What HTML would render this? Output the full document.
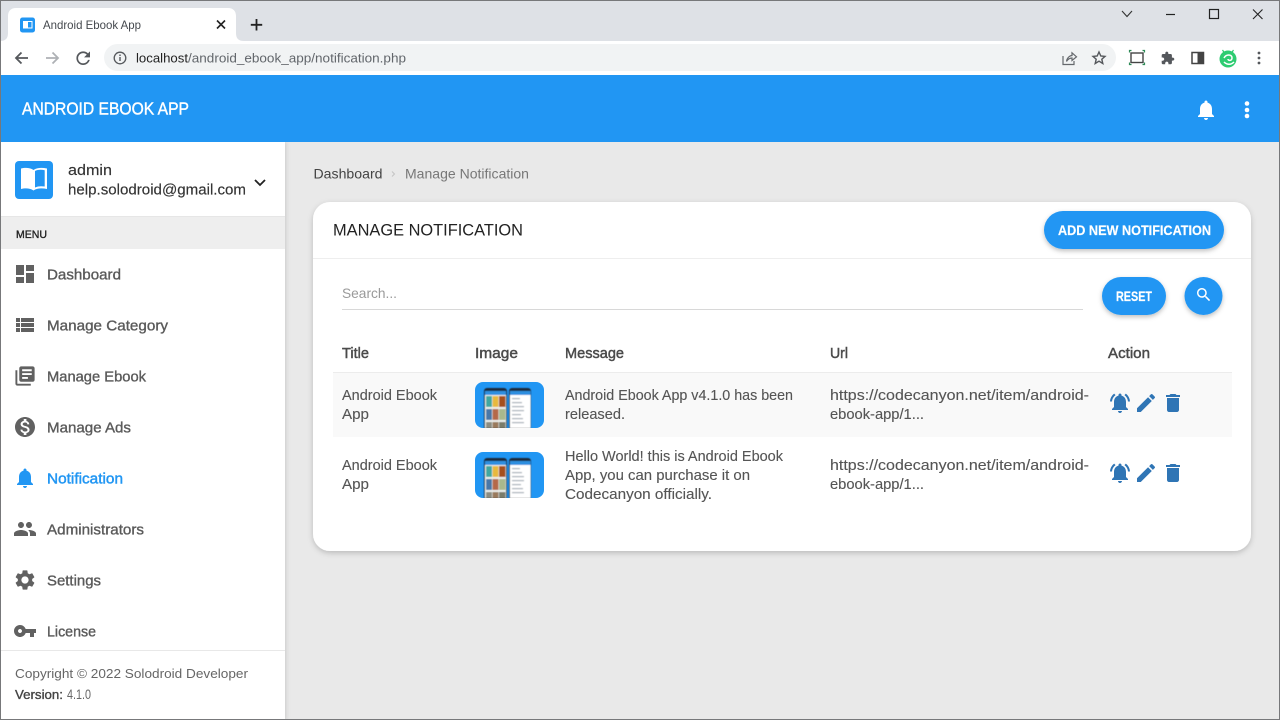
<!DOCTYPE html>
<html lang="en"><head><meta charset="utf-8"><title>Android Ebook App</title>
<style>
html,body{margin:0;padding:0;width:1280px;height:720px;overflow:hidden;background:#e9e9e9}
svg{display:block;filter:blur(.3px)}
text{font-family:"Liberation Sans",sans-serif;fill:#555;font-size:14.5px;stroke:#555;stroke-width:.12px}
.m{font-weight:400;fill:#5a5a5a;stroke:#5a5a5a;stroke-width:.25px}
.h{fill:#4a4a4a;stroke:#4a4a4a;stroke-width:.45px}
.b{fill:#fff;stroke:#fff;stroke-width:.2px;font-weight:700;font-size:14px}
</style></head><body>
<svg width="1280" height="720" viewBox="0 0 1280 720" xmlns="http://www.w3.org/2000/svg">
<defs>
<filter id="s" x="-10%" y="-10%" width="120%" height="125%"><feDropShadow dx="0" dy="2" stdDeviation="3" flood-color="#000" flood-opacity=".2"/></filter>
<filter id="sb" x="-20%" y="-30%" width="140%" height="170%"><feDropShadow dx="0" dy="2" stdDeviation="2.500" flood-color="#000" flood-opacity=".25"/></filter>
<filter id="sh" x="-5%" y="-5%" width="110%" height="110%"><feDropShadow dx="1" dy="0" stdDeviation="2" flood-color="#000" flood-opacity=".14"/></filter>
<filter id="tb" x="-5%" y="-5%" width="110%" height="110%"><feGaussianBlur stdDeviation=".6"/></filter>
<clipPath id="tc"><rect x="0" y="0" width="69" height="46" rx="8"/></clipPath>
<path id="bell" d="M12 22c1.100 0 2-.9 2-2h-4c0 1.100.89 2 2 2zm6-6v-5c0-3.070-1.640-5.640-4.500-6.320V4c0-.83-.67-1.500-1.500-1.500s-1.500.67-1.500 1.500v.68C7.630 5.360 6 7.920 6 11v5l-2 2v1h16v-1l-2-2z"/>
<path id="bella" d="M7.580 4.080L6.150 2.650C3.750 4.480 2.170 7.300 2.030 10.500h2c.15-2.650 1.510-4.970 3.550-6.420zm12.390 6.420h2c-.15-3.200-1.730-6.020-4.120-7.850l-1.420 1.430c2.020 1.450 3.390 3.770 3.540 6.420zM18 11c0-3.070-1.640-5.640-4.500-6.320V4c0-.83-.67-1.500-1.500-1.500s-1.500.67-1.500 1.500v.68C7.630 5.360 6 7.920 6 11v5l-2 2v1h16v-1l-2-2v-5zm-6 11c.14 0 .27-.01.4-.04.65-.14 1.180-.58 1.440-1.180.1-.24.15-.5.15-.78h-4c.01 1.100.9 2 2.010 2z"/>
<path id="edit" d="M3 17.250V21h3.750L17.810 9.940l-3.750-3.750L3 17.250zM20.710 7.040c.39-.39.39-1.020 0-1.410l-2.340-2.340c-.39-.39-1.020-.39-1.410 0l-1.830 1.830 3.750 3.750 1.830-1.830z"/>
<path id="del" d="M6 19c0 1.100.9 2 2 2h8c1.100 0 2-.9 2-2V7H6v12zM19 4h-3.500l-1-1h-5l-1 1H5v2h14V4z"/>
<g id="thumb"><g clip-path="url(#tc)">
<rect width="69" height="46" fill="#2196f3"/>
<g filter="url(#tb)">
<rect x="9" y="6" width="23" height="42" rx="3" fill="#1b2a3a"/>
<rect x="10" y="9" width="21" height="37" fill="#eef1ee"/>
<rect x="10" y="9" width="21" height="4" fill="#2f8fe0"/>
<rect x="11" y="14" width="6" height="11" fill="#3fa7a0"/><rect x="17.500" y="14" width="6" height="11" fill="#e8b93e"/><rect x="24" y="14" width="6.500" height="11" fill="#a5501f"/>
<rect x="11" y="27" width="6" height="11" fill="#4a77a8"/><rect x="17.500" y="27" width="6" height="11" fill="#b5694a"/><rect x="24" y="27" width="6.500" height="11" fill="#a8b88c"/>
<rect x="11" y="40" width="6" height="6" fill="#8c8c80"/><rect x="17.500" y="40" width="6" height="6" fill="#9a7a5c"/><rect x="24" y="40" width="6.500" height="6" fill="#7a7c6a"/>
<rect x="34" y="6" width="22" height="42" rx="3" fill="#1b2a3a"/>
<rect x="35" y="9" width="20.500" height="37" fill="#fff"/>
<rect x="35" y="9" width="20.500" height="4" fill="#2f8fe0"/>
<g fill="#a4acb6"><rect x="37" y="16" width="8" height="1.200"/><rect x="37" y="20" width="10" height="1.200"/><rect x="37" y="24" width="12" height="1.200"/><rect x="37" y="28" width="12" height="1.200"/><rect x="37" y="32" width="9" height="1.200"/><rect x="37" y="36" width="11" height="1.200"/><rect x="37" y="40" width="12" height="1.200"/></g>
</g>
</g></g>
</defs>

<!-- window background -->
<rect width="1280" height="720" fill="#e9e9e9"/>

<!-- Chrome tab strip -->
<rect width="1280" height="41" fill="#dee1e6"/>
<path d="M0 41 C6 41 8 38 8 33 V16 C8 11 11 8 16 8 H228 C233 8 236 11 236 16 V33 C236 38 238 41 244 41Z" fill="#fff"/>
<rect x="20" y="17.500" width="15" height="15" rx="2.500" fill="#2196f3"/>
<rect x="23" y="21" width="9.500" height="7.500" fill="#fff"/>
<rect x="28" y="22" width="3.500" height="5.500" fill="#2196f3"/>
<text x="43" y="29" style="font-size:12px;fill:#45494e;stroke:none" textLength="98" lengthAdjust="spacingAndGlyphs">Android Ebook App</text>
<path d="M217 20.500 L225 28.500 M225 20.500 L217 28.500" stroke="#222" stroke-width="1.600" fill="none"/>
<path d="M256.500 19 V30.500 M250.800 24.800 H262.200" stroke="#222" stroke-width="1.800" fill="none"/>
<!-- window controls -->
<path d="M1122 11 L1127 16.500 L1132 11" stroke="#333" stroke-width="1.100" fill="none"/>
<path d="M1166 14.500 H1175" stroke="#222" stroke-width="1.200" fill="none"/>
<rect x="1209.500" y="9.500" width="9" height="9" fill="none" stroke="#222" stroke-width="1.200"/>
<path d="M1253 9.500 L1262.500 19 M1262.500 9.500 L1253 19" stroke="#222" stroke-width="1.100" fill="none"/>

<!-- Toolbar -->
<rect y="41" width="1280" height="34" fill="#fff"/>
<path d="M28 58 H16 M21.500 52.500 L16 58 L21.500 63.500" stroke="#55585c" stroke-width="1.800" fill="none"/>
<path d="M46 58 H58 M52.500 52.500 L58 58 L52.500 63.500" stroke="#aeb1b5" stroke-width="1.800" fill="none"/>
<g transform="translate(73,48)" fill="#55585c"><path transform="scale(.85)" d="M17.650 6.350C16.200 4.900 14.210 4 12 4c-4.420 0-7.990 3.580-7.990 8s3.570 8 7.990 8c3.730 0 6.840-2.550 7.730-6h-2.080c-.82 2.330-3.040 4-5.650 4-3.310 0-6-2.690-6-6s2.690-6 6-6c1.660 0 3.140.69 4.220 1.780L13 11h7V4l-2.350 2.350z"/></g>
<rect x="104" y="44" width="1012" height="27" rx="13.500" fill="#f1f3f4"/>
<circle cx="120" cy="58" r="5.800" fill="none" stroke="#55585c" stroke-width="1.300"/>
<rect x="119.300" y="57" width="1.400" height="4" fill="#55585c"/><rect x="119.300" y="54.500" width="1.400" height="1.500" fill="#55585c"/>
<text x="136" y="62.500" style="font-size:13px;fill:#222;stroke:none" textLength="52" lengthAdjust="spacingAndGlyphs">localhost</text>
<text x="188" y="62.500" style="font-size:13px;fill:#62666b;stroke:none" textLength="218" lengthAdjust="spacingAndGlyphs">/android_ebook_app/notification.php</text>
<!-- share -->
<path d="M1063 56 V64.500 H1074 V61" stroke="#65686c" stroke-width="1.200" fill="none"/>
<path d="M1066.500 61.500 C1067 57.500 1070 55.500 1072 55.500 V52.800 L1076.500 56.800 L1072 60.500 V58 C1070 58 1068 59 1066.500 61.500Z" stroke="#65686c" stroke-width="1.200" fill="none"/>
<path d="M1099 52 L1100.800 56 L1105 56.400 L1101.800 59.200 L1102.800 63.500 L1099 61.200 L1095.200 63.500 L1096.200 59.200 L1093 56.400 L1097.200 56Z" stroke="#55585c" stroke-width="1.400" fill="none"/>
<!-- capture -->
<rect x="1131" y="53" width="12" height="9.500" fill="none" stroke="#444" stroke-width="1.400"/>
<path d="M1129.500 52.500 V50.500 H1131.500 M1142.500 50.500 H1144.500 V52.500 M1129.500 62.500 V64.500 H1131.500 M1142.500 64.500 H1144.500 V62.500" stroke="#2e8b57" stroke-width="1.200" fill="none"/>
<g transform="translate(1160.500,51) scale(.6)" fill="#55585c"><path d="M20.500 11H19V7c0-1.100-.9-2-2-2h-4V3.500C13 2.120 11.880 1 10.500 1S8 2.120 8 3.500V5H4c-1.100 0-1.990.9-1.990 2v3.800H3.500c1.490 0 2.700 1.210 2.700 2.700s-1.210 2.700-2.700 2.700H2V20c0 1.100.9 2 2 2h3.800v-1.500c0-1.490 1.210-2.700 2.700-2.700 1.490 0 2.700 1.210 2.700 2.700V22H17c1.100 0 2-.9 2-2v-4h1.500c1.380 0 2.500-1.120 2.500-2.500S21.880 11 20.500 11z"/></g>
<rect x="1192" y="52.500" width="11.500" height="11" fill="none" stroke="#444" stroke-width="1.500"/><rect x="1197.500" y="52.500" width="6" height="11" fill="#444"/>
<circle cx="1228" cy="59" r="8.500" fill="#2ecc71"/>
<path d="M1222.500 50 L1224.500 53 M1233.500 50 L1231.500 53" stroke="#2ecc71" stroke-width="1.200"/>
<path d="M1224 58 C1226 54 1232 54 1232 58 C1232 61 1228 61 1228 59 M1224 62 C1227 65 1231 65 1234 62" stroke="#fff" stroke-width="1.500" fill="none"/>
<circle cx="1259" cy="53" r="1.400" fill="#55585c"/><circle cx="1259" cy="58" r="1.400" fill="#55585c"/><circle cx="1259" cy="63" r="1.400" fill="#55585c"/>

<!-- Sidebar -->
<rect x="0" y="142" width="285" height="578" fill="#fff" filter="url(#sh)"/>
<rect x="0" y="217" width="285" height="32" fill="#eeeeee"/>
<rect x="0" y="216" width="285" height="1" fill="#e6e6e6"/>
<rect x="15" y="161" width="38" height="38" rx="4" fill="#2196f3"/>
<path d="M21 168.500 C25 167.500 30 167.500 33.500 170 C37 167.500 42 167.500 47 168.500 V189 C42 188 37 188 33.500 190.500 C30 188 25 188 21 189Z" fill="#fff"/>
<path d="M35 171 C38 169.500 41.500 169.500 44.700 170.300 V186.500 C41.500 186 38 186 35 187.500Z" fill="#2196f3"/>
<text x="68" y="175" class="m" style="fill:#333;stroke:#333;stroke-width:.15px" textLength="44" lengthAdjust="spacingAndGlyphs">admin</text>
<text x="68" y="194.500" class="m" style="fill:#333;stroke:#333;stroke-width:.15px" textLength="178" lengthAdjust="spacingAndGlyphs">help.solodroid@gmail.com</text>
<path d="M255 180 L260 185 L265 180" stroke="#222" stroke-width="1.800" fill="none"/>
<text x="16" y="238" style="font-size:11px;fill:#222;stroke:#222;stroke-width:.35px" textLength="31" lengthAdjust="spacingAndGlyphs">MENU</text>

<g fill="#616161">
<g transform="translate(13,262)"><path d="M3 13h8V3H3v10zm0 8h8v-6H3v6zm10 0h8V11h-8v10zm0-18v6h8V3h-8z"/></g>
<g transform="translate(13,313)"><path d="M3 14h4v-4H3v4zm0 5h4v-4H3v4zM3 9h4V5H3v4zm5 5h13v-4H8v4zm0 5h13v-4H8v4zM8 5v4h13V5H8z"/></g>
<g transform="translate(13.500,364.500) scale(.96)"><path d="M4 6H2v14c0 1.100.9 2 2 2h14v-2H4V6zm16-4H8c-1.100 0-2 .9-2 2v12c0 1.100.9 2 2 2h12c1.100 0 2-.9 2-2V4c0-1.100-.9-2-2-2zm-1 9H9V9h10v2zm-4 4H9v-2h6v2zm4-8H9V5h10v2z"/></g>
<g transform="translate(13,415)"><path d="M12 2C6.480 2 2 6.480 2 12s4.480 10 10 10 10-4.480 10-10S17.520 2 12 2zm1.410 16.090V20h-2.670v-1.930c-1.710-.36-3.160-1.460-3.270-3.400h1.960c.1 1.050.82 1.870 2.650 1.870 1.960 0 2.400-.98 2.400-1.590 0-.83-.44-1.610-2.670-2.140-2.480-.6-4.180-1.620-4.180-3.670 0-1.720 1.390-2.840 3.110-3.210V4h2.670v1.950c1.860.45 2.790 1.860 2.870 3.390H14.300c-.05-1.110-.64-1.870-2.220-1.870-1.500 0-2.400.68-2.400 1.640 0 .84.65 1.390 2.670 1.910s4.180 1.390 4.180 3.910c-.01 1.830-1.380 2.830-3.120 3.160z"/></g>
<g transform="translate(13,517)"><path d="M16 11c1.660 0 2.990-1.340 2.990-3S17.660 5 16 5c-1.660 0-3 1.340-3 3s1.340 3 3 3zm-8 0c1.660 0 2.990-1.340 2.990-3S9.660 5 8 5C6.340 5 5 6.340 5 8s1.340 3 3 3zm0 2c-2.330 0-7 1.170-7 3.500V19h14v-2.500c0-2.330-4.670-3.500-7-3.500zm8 0c-.29 0-.62.02-.97.05 1.160.84 1.970 1.970 1.970 3.450V19h6v-2.500c0-2.330-4.670-3.500-7-3.500z"/></g>
<g transform="translate(13,568)"><path d="M19.140 12.940c.04-.3.06-.61.06-.94 0-.32-.02-.64-.07-.94l2.030-1.580c.18-.14.23-.41.12-.61l-1.920-3.320c-.12-.22-.37-.29-.59-.22l-2.390.96c-.5-.38-1.030-.7-1.620-.94l-.36-2.540c-.04-.24-.24-.41-.48-.41h-3.840c-.24 0-.43.17-.47.41l-.36 2.540c-.59.24-1.130.57-1.620.94l-2.390-.96c-.22-.08-.47 0-.59.22L2.740 8.870c-.12.21-.08.47.12.61l2.030 1.580c-.05.3-.09.63-.09.94s.02.64.07.94l-2.030 1.580c-.18.14-.23.41-.12.61l1.920 3.320c.12.22.37.29.59.22l2.390-.96c.5.38 1.030.7 1.620.94l.36 2.540c.05.24.24.41.48.41h3.840c.24 0 .44-.17.47-.41l.36-2.540c.59-.24 1.130-.56 1.620-.94l2.390.96c.22.08.47 0 .59-.22l1.920-3.320c.12-.22.07-.47-.12-.61l-2.010-1.580zM12 15.600c-1.980 0-3.600-1.620-3.600-3.600s1.620-3.600 3.600-3.600 3.600 1.620 3.600 3.600-1.620 3.600-3.600 3.600z"/></g>
<g transform="translate(13,619)"><path d="M12.650 10C11.830 7.670 9.610 6 7 6c-3.310 0-6 2.690-6 6s2.690 6 6 6c2.610 0 4.830-1.670 5.650-4H17v4h4v-4h2v-4H12.650zM7 14c-1.100 0-2-.9-2-2s.9-2 2-2 2 .9 2 2-.9 2-2 2z"/></g>
</g>
<g transform="translate(13,466)" fill="#2196f3"><use href="#bell"/></g>
<text x="47" y="279.500" class="h" style="fill:#5a5a5a;stroke:#5a5a5a;stroke-width:.35px" textLength="74" lengthAdjust="spacingAndGlyphs">Dashboard</text>
<text x="47" y="330.500" class="h" style="fill:#5a5a5a;stroke:#5a5a5a;stroke-width:.35px" textLength="121" lengthAdjust="spacingAndGlyphs">Manage Category</text>
<text x="47" y="381.500" class="h" style="fill:#5a5a5a;stroke:#5a5a5a;stroke-width:.35px" textLength="99" lengthAdjust="spacingAndGlyphs">Manage Ebook</text>
<text x="47" y="432.500" class="h" style="fill:#5a5a5a;stroke:#5a5a5a;stroke-width:.35px" textLength="84" lengthAdjust="spacingAndGlyphs">Manage Ads</text>
<text x="47" y="483.500" style="fill:#2196f3;stroke:#2196f3;stroke-width:.45px" textLength="76" lengthAdjust="spacingAndGlyphs">Notification</text>
<text x="47" y="534.500" class="h" style="fill:#5a5a5a;stroke:#5a5a5a;stroke-width:.35px" textLength="97" lengthAdjust="spacingAndGlyphs">Administrators</text>
<text x="47" y="585.500" class="h" style="fill:#5a5a5a;stroke:#5a5a5a;stroke-width:.35px" textLength="54" lengthAdjust="spacingAndGlyphs">Settings</text>
<text x="47" y="636.500" class="h" style="fill:#5a5a5a;stroke:#5a5a5a;stroke-width:.35px" textLength="49" lengthAdjust="spacingAndGlyphs">License</text>
<rect x="0" y="650" width="285" height="70" fill="#fff"/>
<rect x="0" y="650" width="285" height="1" fill="#e8e8e8"/>
<text x="15" y="678" style="font-size:13px;fill:#666;stroke:none" textLength="233" lengthAdjust="spacingAndGlyphs">Copyright © 2022 Solodroid Developer</text>
<text x="15" y="699" style="font-size:13px;fill:#444;stroke:#444;stroke-width:.35px" textLength="48" lengthAdjust="spacingAndGlyphs">Version:</text>
<text x="67" y="699" style="font-size:13.500px;fill:#666;stroke:none" textLength="24" lengthAdjust="spacingAndGlyphs">4.1.0</text>

<!-- App bar -->
<rect y="75" width="1280" height="67" fill="#2196f3"/>
<text x="22" y="114.500" style="font-size:17.500px;fill:#fff;stroke:#fff;stroke-width:.4px" textLength="167" lengthAdjust="spacingAndGlyphs">ANDROID EBOOK APP</text>
<g transform="translate(1194,98)" fill="#fff"><use href="#bell"/></g>
<circle cx="1247" cy="103.500" r="2.300" fill="#fff"/><circle cx="1247" cy="110" r="2.300" fill="#fff"/><circle cx="1247" cy="116" r="2.300" fill="#fff"/>

<!-- Breadcrumb -->
<text x="313.500" y="178.500" style="font-size:14px;fill:#444;stroke:none" textLength="69" lengthAdjust="spacingAndGlyphs">Dashboard</text>
<path d="M392 171.500 L394.500 174 L392 176.500" stroke="#c4c4c4" stroke-width="1" fill="none"/>
<text x="405" y="178.500" style="font-size:14px;fill:#777;stroke:none" textLength="124" lengthAdjust="spacingAndGlyphs">Manage Notification</text>

<!-- Card -->
<rect x="313" y="202" width="938" height="349" rx="17" fill="#fff" filter="url(#s)"/>
<rect x="313" y="258" width="938" height="1" fill="#eeeeee"/>
<text x="333" y="235.500" style="font-size:17px;fill:#222;stroke:none" textLength="190" lengthAdjust="spacingAndGlyphs">MANAGE NOTIFICATION</text>
<rect x="1044" y="211" width="180" height="38" rx="19" fill="#2196f3" filter="url(#sb)"/>
<text x="1058" y="235" class="b" textLength="153" lengthAdjust="spacingAndGlyphs">ADD NEW NOTIFICATION</text>
<text x="342" y="298" style="font-size:14px;fill:#9a9a9a;stroke:none" textLength="55" lengthAdjust="spacingAndGlyphs">Search...</text>
<rect x="342" y="309" width="741" height="1" fill="#d8d8d8"/>
<rect x="1102" y="277" width="64" height="38" rx="19" fill="#2196f3" filter="url(#sb)"/>
<text x="1116" y="301" class="b" textLength="36" lengthAdjust="spacingAndGlyphs">RESET</text>
<circle cx="1203.500" cy="296" r="19" fill="#2196f3" filter="url(#sb)"/>
<g transform="translate(1194.750,285.750) scale(.75)" fill="#fff"><path d="M15.500 14h-.79l-.28-.27C15.410 12.590 16 11.110 16 9.500 16 5.910 13.090 3 9.500 3S3 5.910 3 9.500 5.910 16 9.500 16c1.610 0 3.090-.59 4.230-1.570l.27.28v.79l5 4.990L20.490 19l-4.990-5zm-6 0C7.010 14 5 11.990 5 9.500S7.010 5 9.500 5 14 7.010 14 9.500 11.990 14 9.500 14z"/></g>

<!-- Table -->
<text x="342" y="358" class="h" textLength="27" lengthAdjust="spacingAndGlyphs">Title</text>
<text x="475" y="358" class="h" textLength="43" lengthAdjust="spacingAndGlyphs">Image</text>
<text x="565" y="358" class="h" textLength="59" lengthAdjust="spacingAndGlyphs">Message</text>
<text x="830" y="358" class="h" textLength="18" lengthAdjust="spacingAndGlyphs">Url</text>
<text x="1108" y="358" class="h" textLength="42" lengthAdjust="spacingAndGlyphs">Action</text>
<rect x="333" y="373" width="899" height="64" fill="#f9f9f9"/>
<rect x="333" y="372" width="899" height="1" fill="#ececec"/>

<text x="342" y="400" textLength="95" lengthAdjust="spacingAndGlyphs">Android Ebook</text>
<text x="342" y="419" textLength="27" lengthAdjust="spacingAndGlyphs">App</text>
<use href="#thumb" x="475" y="382"/>
<text x="565" y="400" textLength="228" lengthAdjust="spacingAndGlyphs">Android Ebook App v4.1.0 has been</text>
<text x="565" y="419" textLength="60" lengthAdjust="spacingAndGlyphs">released.</text>
<text x="830" y="400" textLength="259" lengthAdjust="spacingAndGlyphs">https://codecanyon.net/item/android-</text>
<text x="830" y="419" textLength="94" lengthAdjust="spacingAndGlyphs">ebook-app/1...</text>
<g fill="#2f75b5">
<use href="#bella" x="1108" y="391"/><use href="#edit" x="1134" y="391"/><use href="#del" x="1161" y="391"/>
<use href="#bella" x="1108" y="461"/><use href="#edit" x="1134" y="461"/><use href="#del" x="1161" y="461"/>
</g>

<text x="342" y="470" textLength="95" lengthAdjust="spacingAndGlyphs">Android Ebook</text>
<text x="342" y="489" textLength="27" lengthAdjust="spacingAndGlyphs">App</text>
<use href="#thumb" x="475" y="452"/>
<text x="565" y="461" textLength="218" lengthAdjust="spacingAndGlyphs">Hello World! this is Android Ebook</text>
<text x="565" y="480" textLength="185" lengthAdjust="spacingAndGlyphs">App, you can purchase it on</text>
<text x="565" y="499" textLength="147" lengthAdjust="spacingAndGlyphs">Codecanyon officially.</text>
<text x="830" y="470" textLength="259" lengthAdjust="spacingAndGlyphs">https://codecanyon.net/item/android-</text>
<text x="830" y="489" textLength="94" lengthAdjust="spacingAndGlyphs">ebook-app/1...</text>

<!-- window frame -->
<rect x=".5" y=".5" width="1279" height="719" fill="none" stroke="#77787a" stroke-width="1"/>
</svg>
</body></html>
